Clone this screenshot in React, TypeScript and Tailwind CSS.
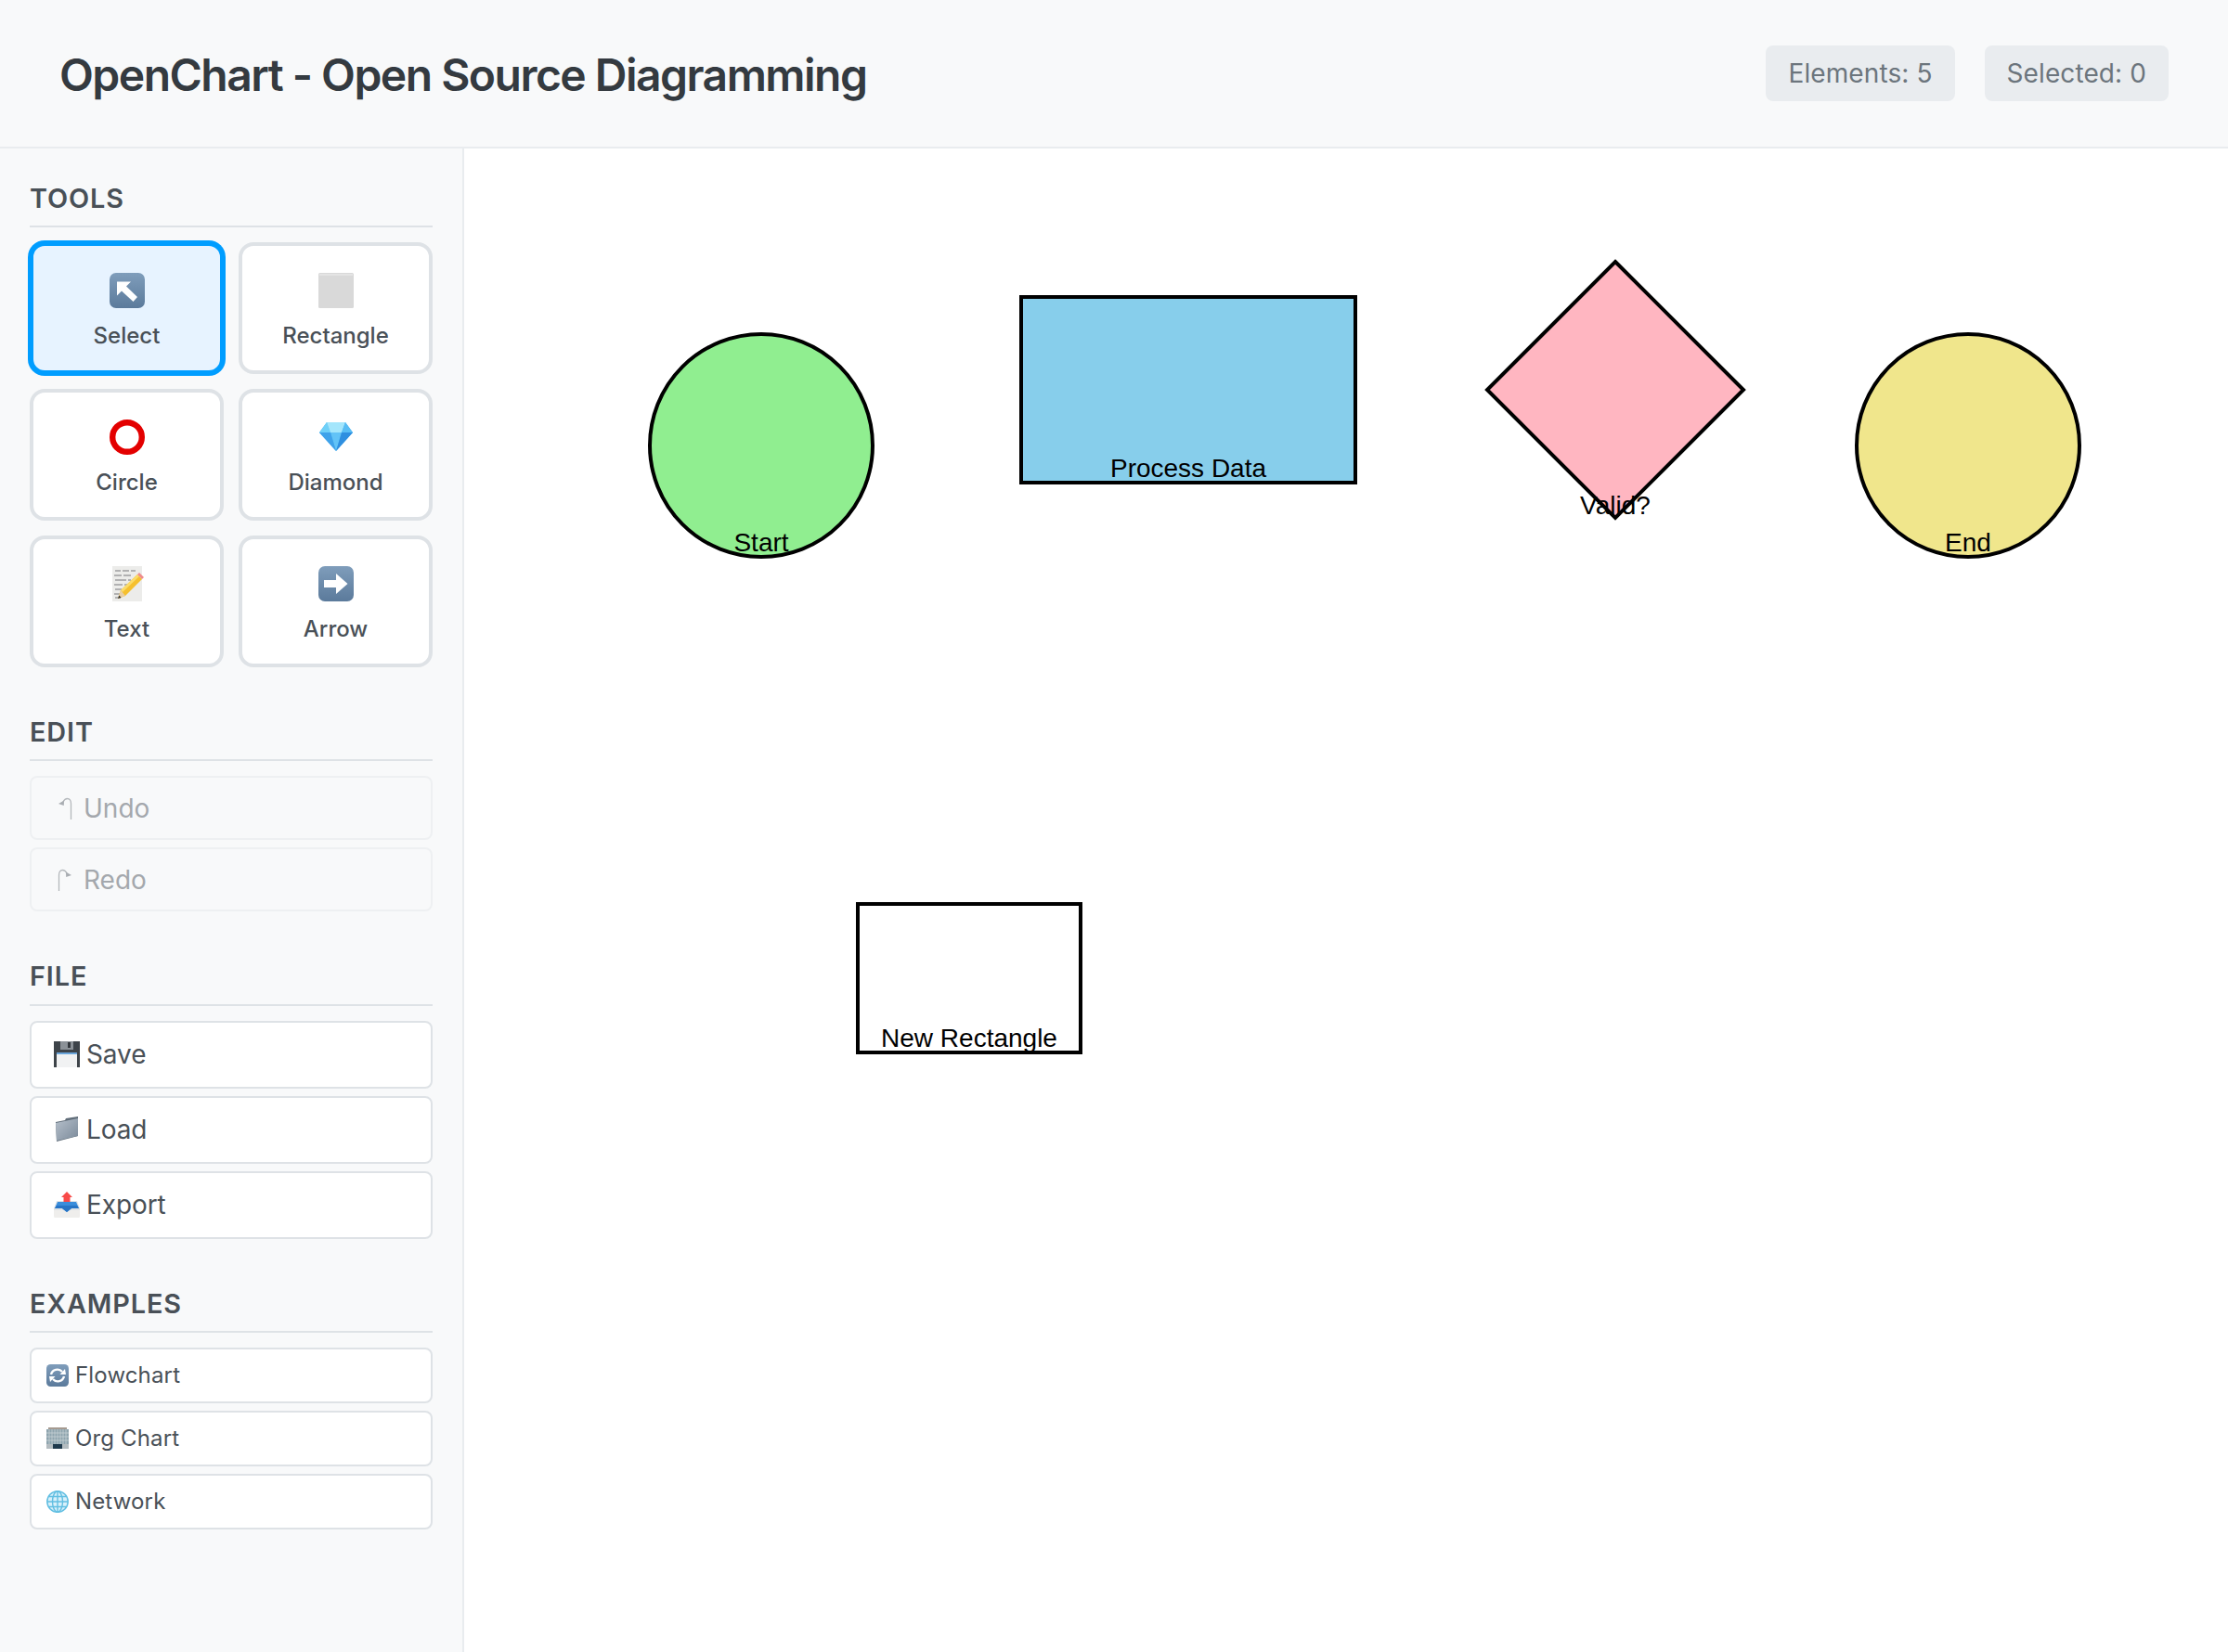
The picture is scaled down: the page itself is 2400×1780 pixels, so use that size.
type IconProps = { className: string };

const SelectIcon = ({ className }: IconProps) => (
  <svg viewBox="0 0 38 38" className={className}>
    <defs>
      <linearGradient id="selBg" x1="0" y1="0" x2="0" y2="1">
        <stop offset="0" stopColor="#7f9dbb" />
        <stop offset="1" stopColor="#5b7a9b" />
      </linearGradient>
    </defs>
    <rect width="38" height="38" rx="7" fill="url(#selBg)" />
    <polygon points="8,9.500 23,9.500 18,14.500 30,26 25.500,31 13,19.500 8,24.500" fill="#fff" />
  </svg>
);

const SquareIcon = ({ className }: IconProps) => (
  <svg viewBox="0 0 38 38" className={className}>
    <rect width="38" height="38" rx="1.5" fill="#d9d9d9" />
    <rect x="1" y="1" width="36" height="2" fill="#e4e4e4" />
  </svg>
);

const CircleIcon = ({ className }: IconProps) => (
  <svg viewBox="0 0 38 38" className={className}>
    <circle cx="19" cy="19" r="15.8" fill="#fff" stroke="#e30000" strokeWidth="6.4" />
  </svg>
);

const DiamondIcon = ({ className }: IconProps) => (
  <svg viewBox="0 0 38 38" className={className}>
    <polygon points="9,3 29,3 37,14 19,34 1,14" fill="#4bb4f2" />
    <polygon points="9,3 13,14 1,14" fill="#6fd0f8" />
    <polygon points="9,3 29,3 25,14 13,14" fill="#a4e6fc" />
    <polygon points="29,3 37,14 25,14" fill="#58bdf4" />
    <polygon points="13,14 25,14 19,34" fill="#62c3f7" />
    <polygon points="1,14 13,14 19,34" fill="#3fa2ea" />
    <polygon points="25,14 37,14 19,34" fill="#2f8fe0" />
  </svg>
);

const MemoIcon = ({ className }: IconProps) => (
  <svg viewBox="0 0 38 38" className={className}>
    <rect x="3" y="0" width="32" height="38" fill="#ececea" />
    <path
      d="M6 5h6m2 0h7m2 0h5M5 10h8m2 0h8M6 15h12m2 0h3M5 20h9m2 0h3M6 25h7m1 0h2M5 30h7M6 34h6"
      stroke="#77777a"
      strokeWidth="1"
      fill="none"
    />
    <polygon points="9,35 12,26 30,9 35,14 17,32" fill="#f5c02f" />
    <polygon points="12,26 30,9 32,11 14,28" fill="#fbdc6a" />
    <polygon points="30,9 32,7 37,12 35,14" fill="#ef8c8c" />
    <polygon points="9,35 12,26 17,32" fill="#e8cfa8" />
    <polygon points="9,35 10.2,31.5 12.5,33.8" fill="#333" />
  </svg>
);

const ArrowIcon = ({ className }: IconProps) => (
  <svg viewBox="0 0 38 38" className={className}>
    <defs>
      <linearGradient id="arrBg" x1="0" y1="0" x2="0" y2="1">
        <stop offset="0" stopColor="#7f9dbb" />
        <stop offset="1" stopColor="#5b7a9b" />
      </linearGradient>
    </defs>
    <rect width="38" height="38" rx="7" fill="url(#arrBg)" />
    <polygon points="6,15 19,15 19,8 31.5,19 19,30 19,23 6,23" fill="#fff" />
  </svg>
);

const SaveIcon = ({ className }: IconProps) => (
  <svg viewBox="0 0 28 28" className={className}>
    <rect x="0" y="0" width="28" height="28" fill="#3d4349" />
    <rect x="7" y="0" width="14" height="9" fill="#8b9197" />
    <rect x="15" y="1" width="3" height="6" fill="#33383d" />
    <rect x="3" y="12" width="22" height="16" fill="#f1f2f3" />
    <rect x="3" y="12" width="22" height="2" fill="#6aa6dc" />
  </svg>
);

const FolderIcon = ({ className }: IconProps) => (
  <svg viewBox="0 0 28 28" className={className}>
    <defs>
      <linearGradient id="fold" x1="0" y1="0" x2="1" y2="1">
        <stop offset="0" stopColor="#b6c0cb" />
        <stop offset="1" stopColor="#7b8a9a" />
      </linearGradient>
    </defs>
    <polygon points="2,6 12,4 13,2 26,0 26,3 26,21 3,27" fill="#5f6c78" />
    <polygon points="2,7 26,2 26,21 3,26" fill="url(#fold)" />
  </svg>
);

const ExportIcon = ({ className }: IconProps) => (
  <svg viewBox="0 0 28 28" className={className}>
    <rect x="0" y="18" width="28" height="10" rx="1.5" fill="#efeeec" />
    <polygon points="3,10 25,10 28,18 28,20 0,20 0,18" fill="#dfe3e6" />
    <polygon points="4,11 24,11 27,18 19,18 14,22 9,18 1,18" fill="#3a8ddb" />
    <polygon points="3,15 25,15 27,18 19,18 14,22 9,18 1,18" fill="#2774c5" />
    <polygon points="14,0 20,6 17.5,6 17.5,11 10.5,11 10.5,6 8,6" fill="#f84a48" />
  </svg>
);

const CycleIcon = ({ className }: IconProps) => (
  <svg viewBox="0 0 24 24" className={className}>
    <defs>
      <linearGradient id="cyc" x1="0" y1="0" x2="0" y2="1">
        <stop offset="0" stopColor="#7f9dbb" />
        <stop offset="1" stopColor="#5b7a9b" />
      </linearGradient>
    </defs>
    <rect width="24" height="24" rx="4.5" fill="url(#cyc)" />
    <path d="M5 11a7 7 0 0 1 12-3" stroke="#fff" strokeWidth="2.4" fill="none" />
    <polygon points="14.5,11 21,11 20,5" fill="#fff" />
    <path d="M19 13a7 7 0 0 1-12 3" stroke="#fff" strokeWidth="2.4" fill="none" />
    <polygon points="9.5,13 3,13 4,19" fill="#fff" />
  </svg>
);

const BuildingIcon = ({ className }: IconProps) => (
  <svg viewBox="0 0 24 24" className={className}>
    <rect x="2" y="0" width="20" height="2" fill="#a59a90" />
    <rect x="0" y="2" width="24" height="21" fill="#8ea4ae" />
    <path
      d="M3 2v16M6 2v16M9 2v16M12 2v16M15 2v16M18 2v16M21 2v16M0 6h24M0 10h24M0 14h24"
      stroke="#c8d2d6"
      strokeWidth="0.8"
    />
    <rect x="7" y="18" width="10" height="5" fill="#1f3a4d" />
    <rect x="0" y="18" width="7" height="5" fill="#b4bcc0" />
    <rect x="17" y="18" width="7" height="5" fill="#b4bcc0" />
  </svg>
);

const GlobeIcon = ({ className }: IconProps) => (
  <svg viewBox="0 0 24 24" className={className}>
    <circle cx="12" cy="12" r="11.2" fill="#d8f0fa" stroke="#62bfe2" strokeWidth="1.5" />
    <g stroke="#62bfe2" strokeWidth="1.4" fill="none">
      <ellipse cx="12" cy="12" rx="5.5" ry="11.2" />
      <path d="M12 1v22M1 12h22M2.5 6.5h19M2.5 17.5h19" />
    </g>
  </svg>
);

const UndoIcon = () => (
  <svg viewBox="0 0 16 24" className="h-[24px] w-[16px] shrink-0" fill="none">
    <path d="M14.5 24V7c0-3.500-1.500-5.500-4-5.500S7 3 6 5" stroke="#b4b8bc" strokeWidth="1.3" />
    <polygon points="1,7 7,3.500 6.800,9" fill="#a9adb2" />
  </svg>
);

const RedoIcon = () => (
  <svg viewBox="0 0 16 24" className="h-[24px] w-[16px] shrink-0" fill="none">
    <path d="M1.500 24V7c0-3.500 1.500-5.500 4-5.500S9 3 10 5" stroke="#b4b8bc" strokeWidth="1.3" />
    <polygon points="15,7 9,3.500 9.200,9" fill="#a9adb2" />
  </svg>
);

const tools = [
  { label: "Select", Icon: SelectIcon, active: true },
  { label: "Rectangle", Icon: SquareIcon },
  { label: "Circle", Icon: CircleIcon },
  { label: "Diamond", Icon: DiamondIcon },
  { label: "Text", Icon: MemoIcon },
  { label: "Arrow", Icon: ArrowIcon },
];

const files = [
  { label: "Save", Icon: SaveIcon },
  { label: "Load", Icon: FolderIcon },
  { label: "Export", Icon: ExportIcon },
];

const examples = [
  { label: "Flowchart", Icon: CycleIcon },
  { label: "Org Chart", Icon: BuildingIcon },
  { label: "Network", Icon: GlobeIcon },
];

const SectionTitle = ({ children }: { children: string }) => (
  <h3 className="mb-4 border-b-2 border-[#dee2e6] pb-2 text-[28.8px] leading-[43.2px] font-semibold tracking-[0.9px] text-[#495057] uppercase">
    {children}
  </h3>
);

const Label = ({ x, y, children }: { x: number; y: number; children: string }) => (
  <text x={x} y={y} textAnchor="middle" fontSize="28" fontFamily="'Liberation Sans', Arial, sans-serif" fill="#000">
    {children}
  </text>
);

export default function App() {
  return (
    <div className="flex h-screen flex-col overflow-hidden bg-white font-['Inter',sans-serif]">
      <header className="flex h-[160px] shrink-0 items-center justify-between border-b-2 border-[#e9ecef] bg-[#f8f9fa] px-16">
        <h1 className="mt-[3px] text-[48px] font-semibold tracking-[-1.52px] text-[#343a40]">
          OpenChart - Open Source Diagramming
        </h1>
        <div className="flex gap-8">
          <span className="rounded-lg bg-[#e9ecef] px-6 py-3 text-[28px] leading-[36px] tracking-[0.1px] text-[#6c757d]">
            Elements: 5
          </span>
          <span className="rounded-lg bg-[#e9ecef] px-6 py-3 text-[28px] leading-[36px] tracking-[0.1px] text-[#6c757d]">
            Selected: 0
          </span>
        </div>
      </header>

      <div className="flex min-h-0 flex-1">
        <aside className="flex w-[500px] shrink-0 flex-col gap-12 border-r-2 border-[#e9ecef] bg-[#f8f9fa] p-8">
          <section>
            <SectionTitle>Tools</SectionTitle>
            <div className="grid grid-cols-2 gap-4">
              {tools.map(({ label, Icon, active }) => (
                <button
                  key={label}
                  className={
                    active
                      ? "flex h-[142px] flex-col items-center justify-start gap-[10px] rounded-2xl border-4 border-[#009dff] bg-[#e7f3ff] pt-6 shadow-[0_0_0_2px_#009dff]"
                      : "flex h-[142px] flex-col items-center justify-start gap-[10px] rounded-2xl border-4 border-[#dee2e6] bg-white pt-6"
                  }
                >
                  <span className="flex h-[48px] items-center">
                    <Icon className="h-[38px] w-[38px]" />
                  </span>
                  <span className="text-[24px] leading-[30px] font-medium text-[#495057]">{label}</span>
                </button>
              ))}
            </div>
          </section>

          <section>
            <SectionTitle>Edit</SectionTitle>
            <div className="flex flex-col gap-2">
              <button className="flex h-[69px] items-center gap-3 rounded-lg border-2 border-[#eef0f2] pl-[28px] text-[28px] text-[#a4a8ad]">
                <UndoIcon />
                Undo
              </button>
              <button className="flex h-[69px] items-center gap-3 rounded-lg border-2 border-[#eef0f2] pl-[28px] text-[28px] text-[#a4a8ad]">
                <RedoIcon />
                Redo
              </button>
            </div>
          </section>

          <section>
            <SectionTitle>File</SectionTitle>
            <div className="flex flex-col gap-2">
              {files.map(({ label, Icon }) => (
                <button
                  key={label}
                  className="flex h-[73px] items-center gap-[7px] rounded-lg border-2 border-[#dee2e6] bg-white px-6 text-[28px] tracking-[-0.1px] text-[#495057]"
                >
                  <Icon className="h-[28px] w-[28px]" />
                  {label}
                </button>
              ))}
            </div>
          </section>

          <section>
            <SectionTitle>Examples</SectionTitle>
            <div className="flex flex-col gap-2">
              {examples.map(({ label, Icon }) => (
                <button
                  key={label}
                  className="flex h-[60px] items-center gap-[7px] rounded-lg border-2 border-[#dee2e6] bg-white px-4 text-[24px] tracking-[0.15px] text-[#495057]"
                >
                  <Icon className="h-[24px] w-[24px]" />
                  {label}
                </button>
              ))}
            </div>
          </section>
        </aside>

        <main className="min-w-0 flex-1 bg-white">
          {/* shape coordinates are relative to the canvas, which starts at 500,160 on the page */}
          <svg className="block h-full w-full">
            <circle cx="320" cy="320" r="120" fill="#90ee90" stroke="#000" strokeWidth="4" />
            <Label x={320} y={434}>Start</Label>
            <rect x="600" y="160" width="360" height="200" fill="#87ceeb" stroke="#000" strokeWidth="4" />
            <Label x={780} y={354}>Process Data</Label>
            <polygon points="1240,122 1378,260 1240,398 1102,260" fill="#ffb6c1" stroke="#000" strokeWidth="4" />
            <Label x={1240} y={394}>Valid?</Label>
            <circle cx="1620" cy="320" r="120" fill="#f0e68c" stroke="#000" strokeWidth="4" />
            <Label x={1620} y={434}>End</Label>
            <rect x="424" y="814" width="240" height="160" fill="#fff" stroke="#000" strokeWidth="4" />
            <Label x={544} y={968}>New Rectangle</Label>
          </svg>
        </main>
      </div>
    </div>
  );
}
